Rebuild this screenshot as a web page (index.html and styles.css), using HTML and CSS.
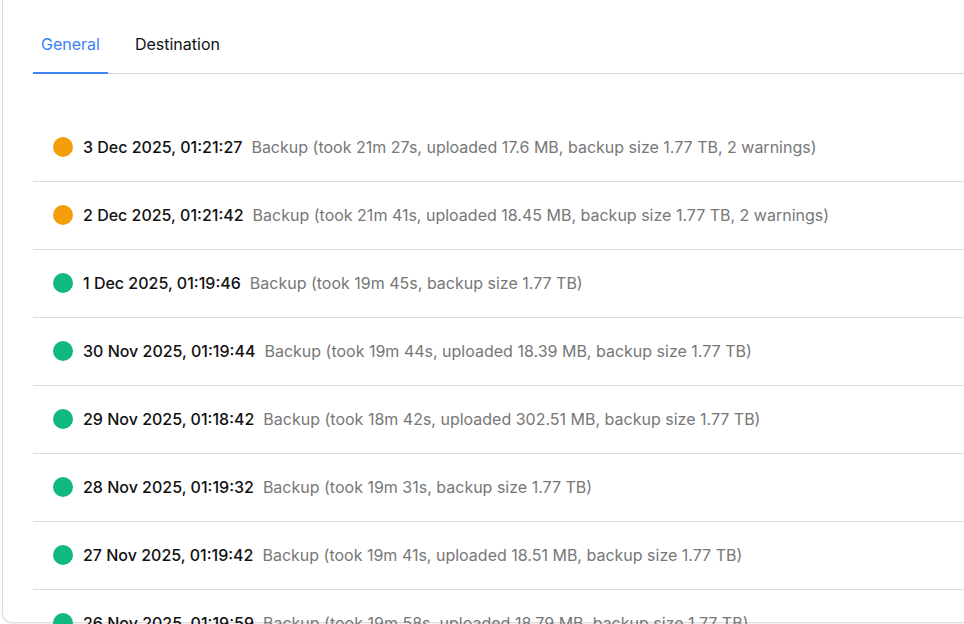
FILE: index.html
```html
<!DOCTYPE html>
<html>
<head>
<meta charset="utf-8">
<link rel="stylesheet" href="styles.css">
</head>
<body>
<div class="card">
  <div class="tabs">
    <div class="tab active">General</div>
    <div class="tab">Destination</div>
  </div>
  <ul class="list">
    <li class="row"><span class="dot warn"></span><span class="date">3 Dec 2025, 01:21:27</span><span class="desc">Backup (took 21m 27s, uploaded 17.6 MB, backup size 1.77 TB, 2 warnings)</span></li>
    <li class="row"><span class="dot warn"></span><span class="date">2 Dec 2025, 01:21:42</span><span class="desc">Backup (took 21m 41s, uploaded 18.45 MB, backup size 1.77 TB, 2 warnings)</span></li>
    <li class="row"><span class="dot ok"></span><span class="date">1 Dec 2025, 01:19:46</span><span class="desc">Backup (took 19m 45s, backup size 1.77 TB)</span></li>
    <li class="row"><span class="dot ok"></span><span class="date">30 Nov 2025, 01:19:44</span><span class="desc">Backup (took 19m 44s, uploaded 18.39 MB, backup size 1.77 TB)</span></li>
    <li class="row"><span class="dot ok"></span><span class="date">29 Nov 2025, 01:18:42</span><span class="desc">Backup (took 18m 42s, uploaded 302.51 MB, backup size 1.77 TB)</span></li>
    <li class="row"><span class="dot ok"></span><span class="date">28 Nov 2025, 01:19:32</span><span class="desc">Backup (took 19m 31s, backup size 1.77 TB)</span></li>
    <li class="row"><span class="dot ok"></span><span class="date">27 Nov 2025, 01:19:42</span><span class="desc">Backup (took 19m 41s, uploaded 18.51 MB, backup size 1.77 TB)</span></li>
    <li class="row"><span class="dot ok"></span><span class="date">26 Nov 2025, 01:19:59</span><span class="desc">Backup (took 19m 58s, uploaded 18.79 MB, backup size 1.77 TB)</span></li>
  </ul>
</div>
</body>
</html>
```

FILE: styles.css
```css
html, body {
  margin: 0;
  padding: 0;
  background: #ffffff;
  overflow: hidden;
  width: 964px;
  height: 624px;
}
body {
  font-family: Inter, "Noto Sans", sans-serif;
  font-size: 16px;
  color: #111111;
}
.card {
  margin-left: 2px;
  width: 1020px;
  height: 623px;
  box-sizing: border-box;
  border: 1px solid #dcdcdc;
  border-top: none;
  border-radius: 0 0 10px 10px;
  box-shadow: 0 1px 3px rgba(0, 0, 0, 0.08);
  padding: 0 0 0 30px;
  background: #fff;
}
.tabs {
  display: flex;
  gap: 19px;
  border-bottom: 1px solid #d6d6d6;
  padding-top: 32px;
}
.tab {
  padding: 0 8px 16px;
  line-height: 24px;
  margin-bottom: -1px;
  border-bottom: 2px solid transparent;
}
.tab.active {
  color: #3b82f6;
  border-bottom-color: #3b82f6;
}
.list {
  list-style: none;
  margin: 0;
  padding: 40px 0 0;
}
.row {
  display: flex;
  align-items: center;
  box-sizing: border-box;
  height: 68px;
  padding: 0 0 1px 20px;
  border-bottom: 1px solid #dddddd;
  white-space: nowrap;
}
.dot {
  width: 20px;
  height: 20px;
  border-radius: 50%;
  flex: none;
  margin-right: 10px;
}
.dot.warn { background: #f59e0b; }
.dot.ok { background: #10b981; }
.date {
  font-weight: 500;
  color: #111111;
  margin-right: 9px;
}
.desc {
  color: #777777;
}
```
